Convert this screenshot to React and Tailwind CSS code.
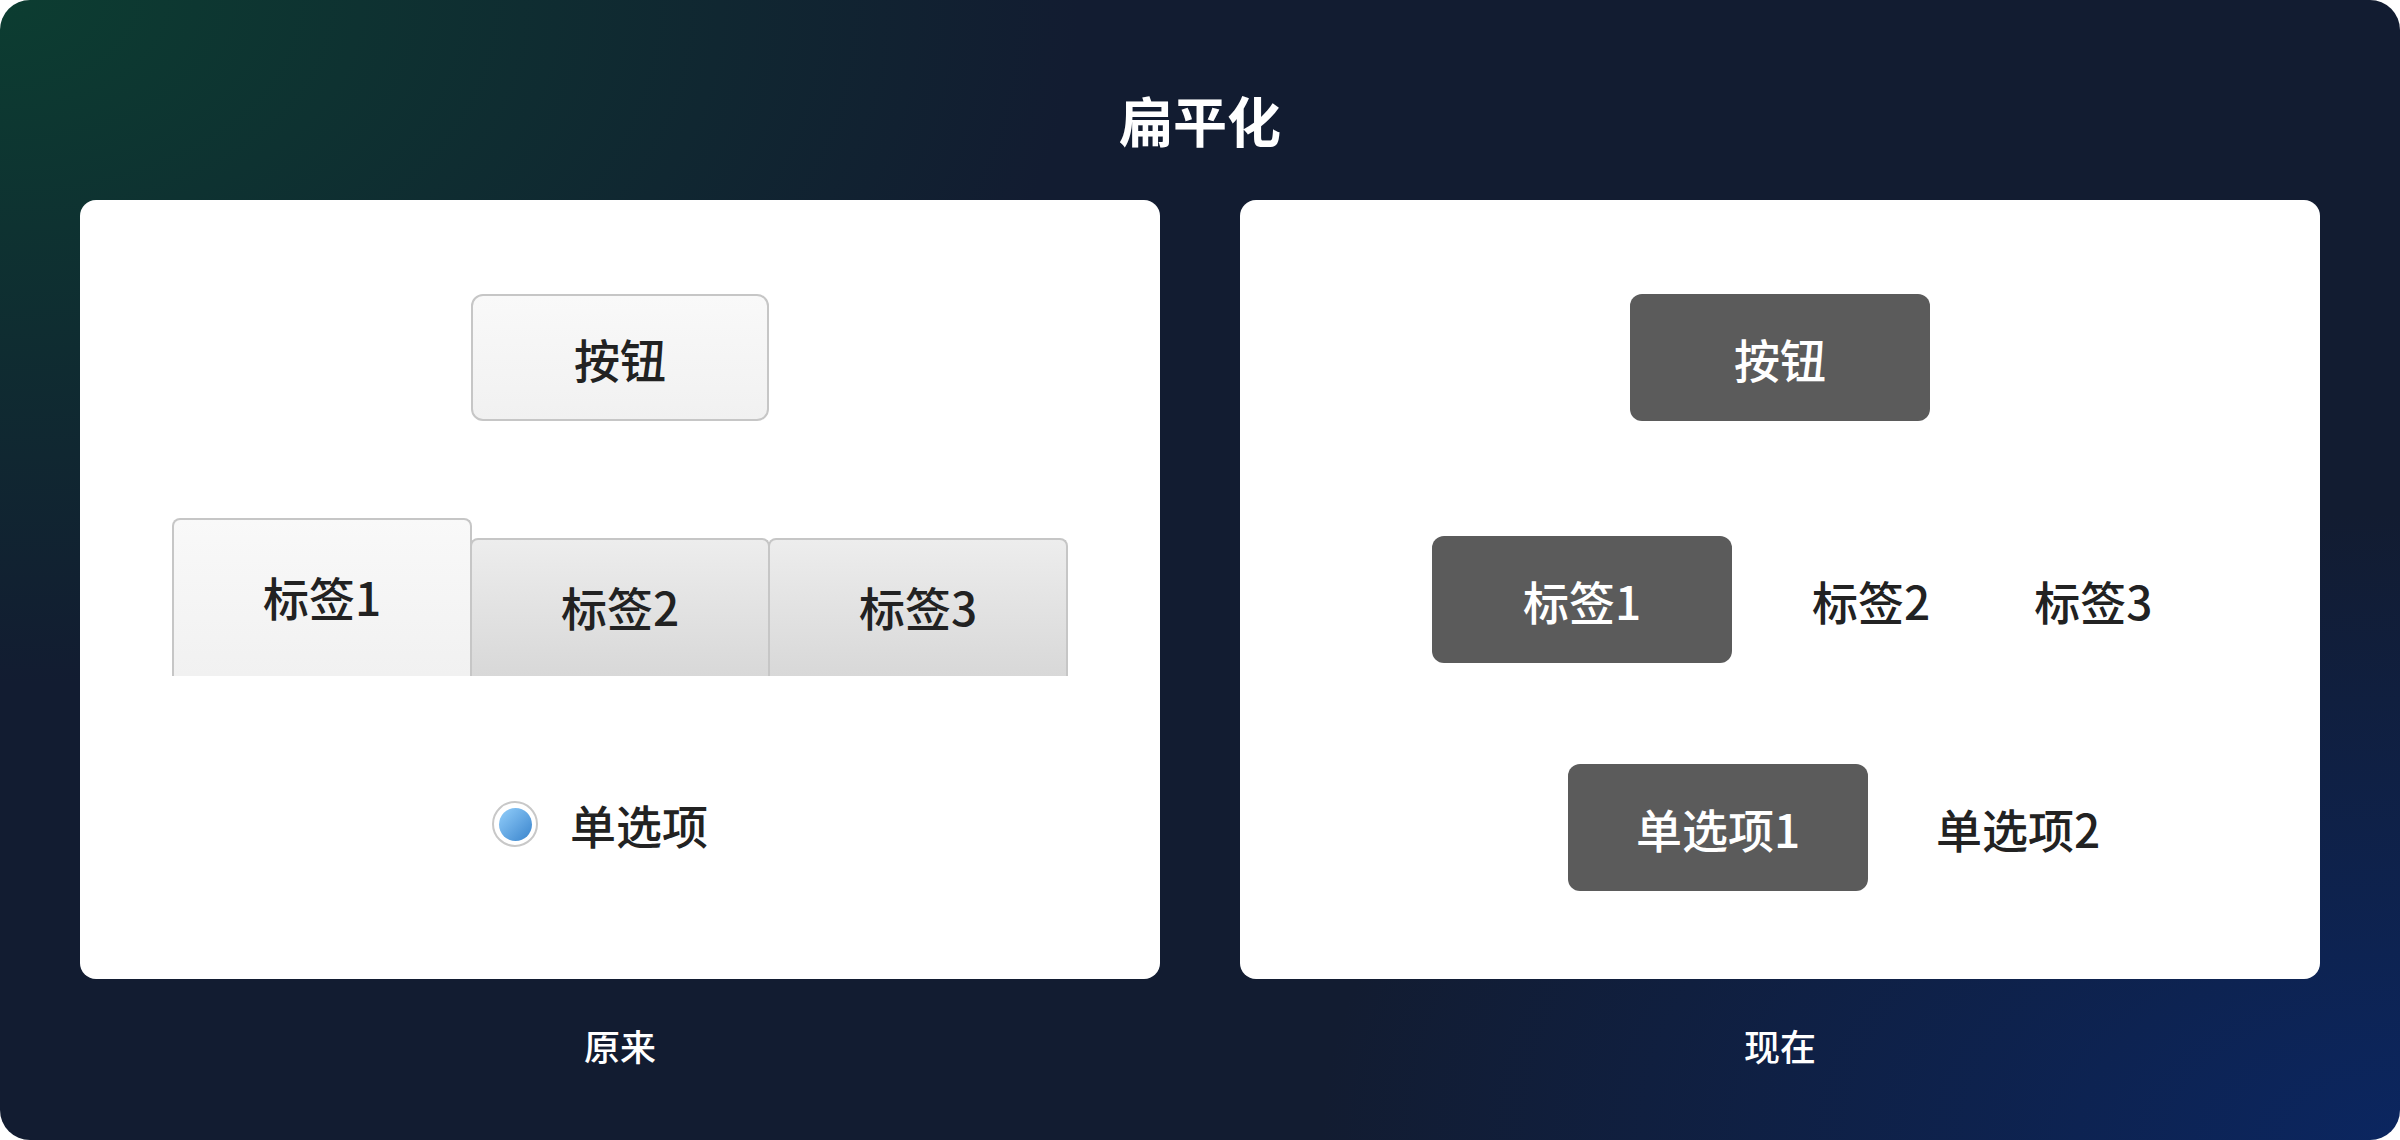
import React from "react";

const font = { fontFamily: '"Noto Sans CJK SC", "Noto Sans", sans-serif' };

const OldTab = ({ label, active }) => (
  <div
    className={
      active
        ? "w-[300px] h-[158px] flex items-center justify-center border-2 border-b-0 border-[#c6c6c6] rounded-t-[8px] bg-gradient-to-b from-[#f9f9f9] to-[#f1f1f1] pb-[4px]"
        : "w-[300px] h-[138px] flex items-center justify-center border-2 border-b-0 border-[#c6c6c6] rounded-t-[8px] bg-gradient-to-b from-[#ededed] to-[#d8d8d8] -ml-[2px] pb-[4px]"
    }
  >
    <span className="text-[46px] leading-none font-medium text-[#222]">{label}</span>
  </div>
);

const Before = () => {
  return (
    <div className="bg-white rounded-[16px] h-[779px] flex flex-col items-center pt-[94px]">
      <div className="w-[298px] h-[127px] rounded-[12px] border-2 border-[#c6c6c6] bg-gradient-to-b from-[#f9f9f9] to-[#f1f1f1] flex items-center justify-center">
        <span className="text-[46px] leading-none font-medium text-[#222]">按钮</span>
      </div>
      <div className="mt-[97px] flex items-end">
        <OldTab label="标签1" active />
        <OldTab label="标签2" />
        <OldTab label="标签3" />
      </div>
      <div className="mt-[125px] flex items-center pr-[40px]">
        <div className="w-[46px] h-[46px] rounded-full border-2 border-[#c8c8c8] bg-white flex items-center justify-center">
          <div className="w-[33px] h-[33px] rounded-full bg-gradient-to-br from-[#93cffb] to-[#3884cc]" />
        </div>
        <span className="ml-[32px] text-[46px] leading-none font-medium text-[#222]">单选项</span>
      </div>
    </div>
  );
};

const After = () => {
  return (
    <div className="bg-white rounded-[16px] h-[779px] flex flex-col pt-[94px]">
      <div className="self-center w-[300px] h-[127px] rounded-[12px] bg-[#5b5b5b] flex items-center justify-center">
        <span className="text-[46px] leading-none font-medium text-white">按钮</span>
      </div>
      <div className="mt-[115px] pl-[192px] flex items-center">
        <div className="w-[300px] h-[127px] rounded-[12px] bg-[#5b5b5b] flex items-center justify-center">
          <span className="text-[46px] leading-none font-medium text-white">标签1</span>
        </div>
        <span className="ml-[80px] text-[46px] leading-none font-medium text-[#222]">标签2</span>
        <span className="ml-[104px] text-[46px] leading-none font-medium text-[#222]">标签3</span>
      </div>
      <div className="mt-[101px] pl-[328px] flex items-center">
        <div className="w-[300px] h-[127px] rounded-[12px] bg-[#5b5b5b] flex items-center justify-center">
          <span className="text-[46px] leading-none font-medium text-white">单选项1</span>
        </div>
        <span className="ml-[68px] text-[46px] leading-none font-medium text-[#222]">单选项2</span>
      </div>
    </div>
  );
};

export default function App() {
  return (
    <div className="w-[2400px] h-[1140px] bg-white" style={font}>
      <div className="w-full h-full rounded-[30px] overflow-hidden bg-[#121c31] bg-[radial-gradient(ellipse_45%_60%_at_0%_0%,#0c3d31_0%,rgba(18,28,49,0)_100%),radial-gradient(ellipse_45%_55%_at_100%_100%,#0b2660_0%,rgba(18,28,49,0)_100%)]">
        <div className="h-[200px] pt-[40px] flex items-center justify-center">
          <h1 className="text-[54px] leading-none font-bold text-white">扁平化</h1>
        </div>
        <div className="px-[80px] grid grid-cols-2 gap-[80px]">
          <Before />
          <After />
        </div>
        <div className="px-[80px] grid grid-cols-2 gap-[80px] mt-[48px]">
          <p className="text-center text-[36px] leading-none font-medium text-white">原来</p>
          <p className="text-center text-[36px] leading-none font-medium text-white">现在</p>
        </div>
      </div>
    </div>
  );
}
